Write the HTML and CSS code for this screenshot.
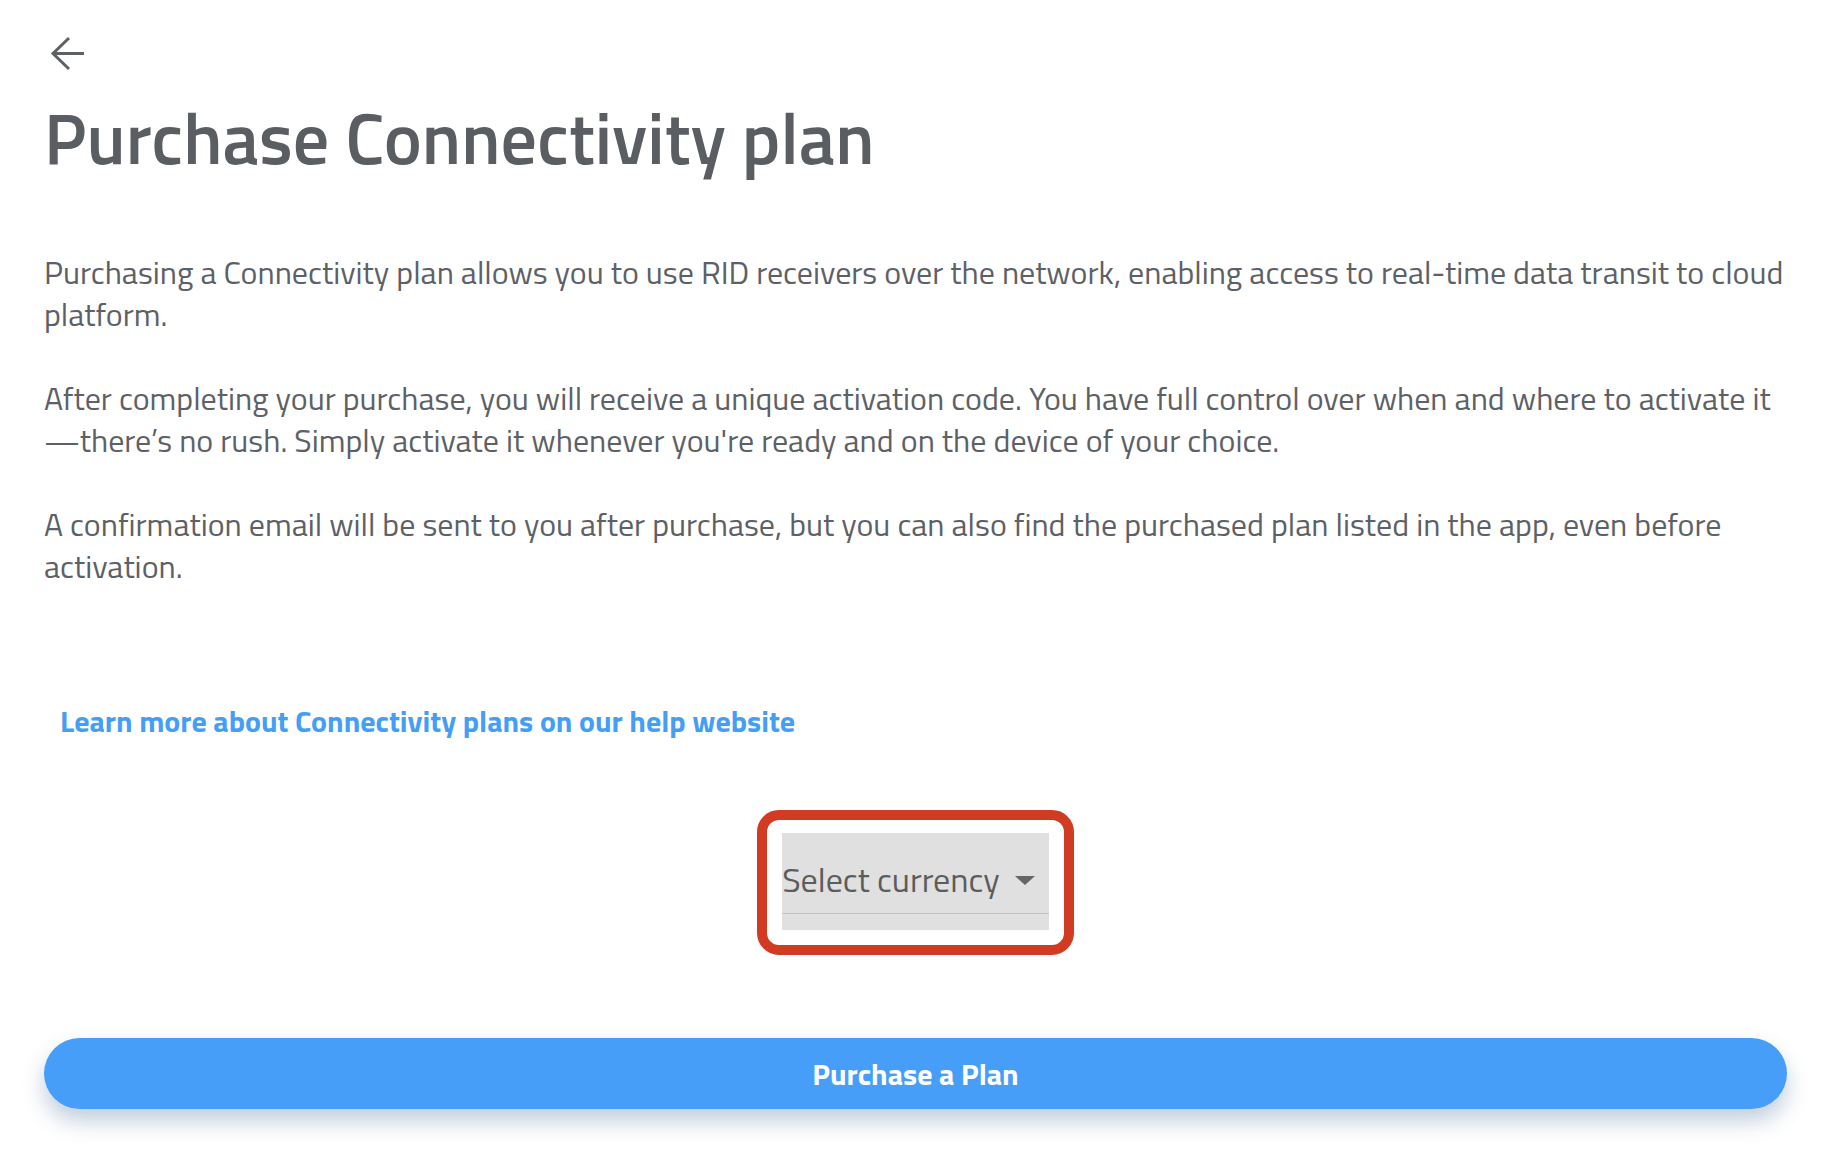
FILE: index.html
```html
<!DOCTYPE html>
<html lang="en">
<head>
<meta charset="utf-8">
<title>Purchase Connectivity plan</title>
<link rel="stylesheet" href="styles.css">
</head>
<body>
<main class="page">
  <a class="back" href="#" aria-label="Back">
    <svg class="back-icon" viewBox="0 0 36 36" width="36" height="36" aria-hidden="true">
      <polyline points="19,2 3,17.5 19,33" />
      <line x1="3" y1="17.5" x2="34" y2="17.5" />
    </svg>
  </a>
  <h1 class="title">Purchase Connectivity plan</h1>
  <section class="intro">
    <p>Purchasing a Connectivity plan allows you to use RID receivers over the network, enabling access to real-time data transit to cloud platform.</p>
    <p>After completing your purchase, you will receive a unique activation code. You have full control over when and where to activate it—there’s no rush. Simply activate it whenever you're ready and on the device of your choice.</p>
    <p>A confirmation email will be sent to you after purchase, but you can also find the purchased plan listed in the app, even before activation.</p>
  </section>
  <a class="help-link" href="#">Learn more about Connectivity plans on our help website</a>
  <div class="currency-row">
    <div class="highlight">
      <div class="select">
        <div class="select-value">
          <span class="select-label">Select currency</span>
          <span class="select-caret"></span>
        </div>
        <div class="select-line"></div>
      </div>
    </div>
  </div>
  <button class="purchase" type="button">Purchase a Plan</button>
</main>
</body>
</html>
```
FILE: styles.css
```css
html, body {
  margin: 0;
  padding: 0;
  background: #ffffff;
}

body {
  font-family: "Titillium Web", "Roboto Condensed", "Liberation Sans", sans-serif;
  color: #5d6166;
}

.page {
  display: flex;
  flex-direction: column;
  padding: 36px 35px 66px 44px;
}

.back {
  display: block;
  width: 36px;
  height: 36px;
  margin-left: 6px;
}

.back-icon {
  display: block;
  fill: none;
  stroke: #5d6166;
  stroke-width: 3;
  stroke-linejoin: miter;
}

.title {
  margin: 22px 0 0;
  font-size: 72px;
  font-weight: 600;
  line-height: 86px;
  color: #5a5e63;
  letter-spacing: 0;
}

.intro {
  margin-top: 71px;
}

.intro p {
  margin: 0 0 42px;
  font-size: 32px;
  font-weight: 400;
  line-height: 42px;
}

.intro p:last-child {
  margin-bottom: 0;
}

.help-link {
  align-self: flex-start;
  margin: 114px 0 0 16px;
  font-size: 30px;
  font-weight: 700;
  line-height: 40px;
  color: #459ef5;
  text-decoration: none;
}

.currency-row {
  display: flex;
  justify-content: center;
  margin-top: 69px;
}

.highlight {
  border: 10px solid #d13b22;
  border-radius: 22px;
  padding: 13px 15px 15px;
}

.select {
  background: #e0e0e0;
  padding: 26px 0 16px;
}

.select-value {
  display: flex;
  align-items: center;
  padding-right: 14px;
}

.select-label {
  font-size: 34px;
  line-height: 40px;
  color: #5c5c5c;
}

.select-caret {
  width: 0;
  height: 0;
  margin-left: 15px;
  margin-top: 2px;
  border-left: 10px solid transparent;
  border-right: 10px solid transparent;
  border-top: 9px solid #666666;
}

.select-line {
  height: 1px;
  margin-top: 14px;
  background: #c4c4c4;
}

.purchase {
  margin-top: 83px;
  height: 71px;
  border: none;
  border-radius: 36px;
  background: #469ef8;
  color: #ffffff;
  font-family: "Titillium Web", "Roboto Condensed", "Liberation Sans", sans-serif;
  font-size: 30px;
  font-weight: 700;
  box-shadow: 0 12px 22px rgba(30, 80, 130, 0.28);
  cursor: pointer;
}
```
